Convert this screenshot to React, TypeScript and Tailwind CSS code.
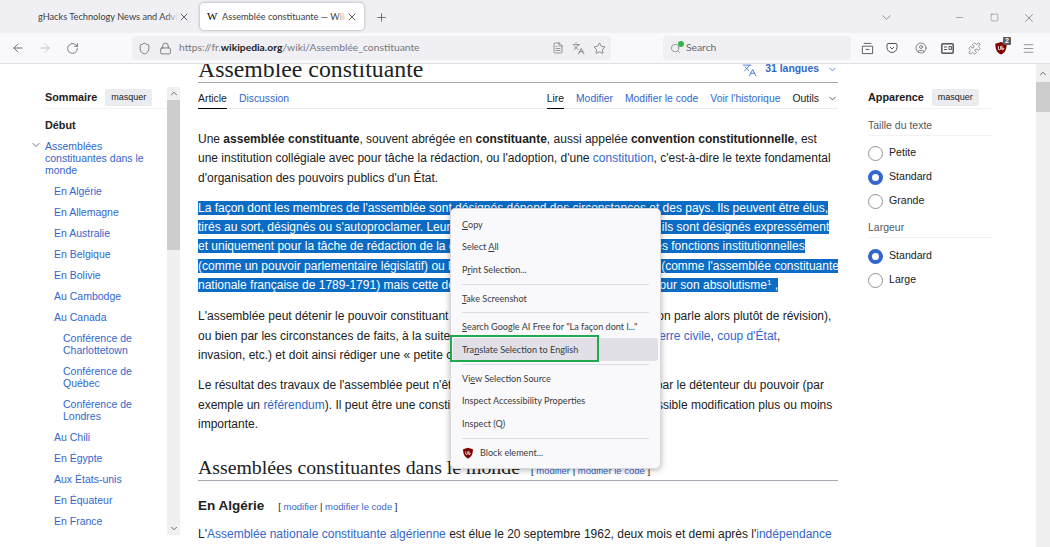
import React from 'react';
import {
  ArrowLeft, ArrowRight, RotateCw, Shield, Lock, FileText, Languages, Star, Search,
  ChevronDown, ChevronUp, Minus, Square, X, Plus, Menu, Puzzle, CircleUser,
} from 'lucide-react';

const A = ({ children }: { children: React.ReactNode }) => <a className="text-[#3366cc]">{children}</a>;

function Sel({ children }: { children: React.ReactNode }) {
  return <span className="bg-[#0a6cc4] text-white">{children}</span>;
}

function Line({ children }: { children: React.ReactNode }) {
  return <div className="h-[19.3px] whitespace-nowrap">{children}</div>;
}

function Radio({ on, label }: { on?: boolean; label: string }) {
  return (
    <div className="flex h-[24px] items-center gap-[6px]">
      {on ? (
        <span className="h-[15px] w-[15px] rounded-full border-[4.5px] border-[#3366cc] bg-white" />
      ) : (
        <span className="h-[15px] w-[15px] rounded-full border border-[#8f9398] bg-white" />
      )}
      <span className="text-[10.6px] text-[#202122]">{label}</span>
    </div>
  );
}

function TocItem({ lines, indent = 'pl-[9px]' }: { lines: string[]; indent?: string }) {
  return (
    <div className={`${indent} py-[4.5px] text-[10.5px] leading-[12px] text-[#3366cc]`}>
      {lines.map((l) => (
        <div key={l} className="whitespace-nowrap">{l}</div>
      ))}
    </div>
  );
}

function MenuItem({ children, active }: { children: React.ReactNode; active?: boolean }) {
  return (
    <div className={`mx-[2px] flex h-[22.7px] items-center rounded-[3px] px-[9px] whitespace-nowrap ${active ? 'bg-[#e0e0e6]' : ''}`}>
      {children}
    </div>
  );
}

const Sep = () => <div className="mx-[11px] my-[2.5px] h-px bg-[#dcdce0]" />;

function UBlock({ size }: { size: number }) {
  return (
    <svg width={size} height={size} viewBox="0 0 16 16">
      <path d="M8 1 L14.5 3 C14.5 9 13 13 8 15.5 C3 13 1.5 9 1.5 3 Z" fill="#800000" />
      <path d="M5 6 V9 C5 10.5 7.5 10.5 7.5 9 V6 M9 5 V10 M9 9 C10.5 7 11.5 8 11 9.5 C10.5 10.5 9.5 10 9 9.5" stroke="#fff" strokeWidth="1" fill="none" />
    </svg>
  );
}

export default function App() {
  return (
    <div className="relative flex h-[547px] w-[1050px] flex-col overflow-hidden bg-white font-['Liberation_Sans',sans-serif] text-[#202122]">
      {/* tabs */}
      <div className="flex h-[33px] items-start bg-[#f0f0f4] font-['Lato',sans-serif] text-[9.2px] text-[#3c3c40]">
        <div className="ml-[38px] mt-[3px] flex h-[27px] w-[152px] items-center">
          <span className="relative w-[144px] overflow-hidden whitespace-nowrap">
            gHacks Technology News and Advic
            <span className="absolute inset-y-0 right-0 w-[12px] bg-linear-to-r from-transparent to-[#f0f0f4]" />
          </span>
          <X size={12} className="shrink-0" strokeWidth={1.6} />
        </div>
        <div className="ml-[10px] mt-[3px] flex h-[27px] w-[164px] items-center rounded-[4px] bg-white pl-[7px] pr-[6px] shadow-[0_0_3px_rgba(0,0,0,0.35)]">
          <span className="w-[15px] shrink-0 font-['Liberation_Serif',serif] text-[11px] text-black">W</span>
          <span className="relative w-[124px] shrink-0 overflow-hidden whitespace-nowrap">
            Assemblée constituante — Wiki
            <span className="absolute inset-y-0 right-0 w-[10px] bg-linear-to-r from-transparent to-white" />
          </span>
          <X size={12} className="shrink-0" strokeWidth={1.6} />
        </div>
        <Plus size={13} className="ml-[11px] mt-[11px] text-[#55555a]" strokeWidth={1.5} />
        <div className="ml-auto mr-[14px] mt-[10px] flex items-center text-[#55555a]">
          <ChevronDown size={15} strokeWidth={1} />
          <Minus size={11} strokeWidth={1} className="ml-[60px]" />
          <Square size={9} strokeWidth={1.1} className="ml-[25px]" />
          <X size={14} strokeWidth={1} className="ml-[23px]" />
        </div>
      </div>

      {/* toolbar */}
      <div className="flex h-[31px] items-center border-b border-[#e0e0e2] bg-[#f9f9fb] text-[#55555a]">
        <ArrowLeft size={14} className="ml-[11px]" strokeWidth={1.4} />
        <ArrowRight size={14} className="ml-[13px] text-[#bbbbc0]" strokeWidth={1.4} />
        <RotateCw size={13} className="ml-[14px]" strokeWidth={1.4} />
        <div className="ml-[53px] flex h-[24px] w-[479px] items-center rounded-[4px] bg-[#f0f0f4] pl-[6px] pr-[5px] font-['Lato',sans-serif] text-[10.3px]">
          <Shield size={13} strokeWidth={1.3} />
          <Lock size={13} strokeWidth={1.3} className="ml-[8px]" />
          <span className="ml-[7px] whitespace-nowrap text-[#77777c]">https://fr.<span className="font-bold text-[#202124]">wikipedia.org</span>/wiki/Assemblée_constituante</span>
          <FileText size={12} strokeWidth={1.2} className="ml-auto" />
          <Languages size={13} strokeWidth={1.2} className="ml-[8px]" />
          <Star size={13} strokeWidth={1.2} className="ml-[8px]" />
        </div>
        <div className="ml-[52px] flex h-[24px] w-[188px] items-center rounded-[4px] bg-[#f0f0f4] pl-[7px] font-['Lato',sans-serif] text-[10.3px] text-[#66666a]">
          <span className="relative">
            <Search size={11} strokeWidth={1.3} />
            <span className="absolute -right-[3px] -top-[2px] h-[6px] w-[6px] rounded-full bg-[#2fb84a]" />
          </span>
          <span className="ml-[5px]">Search</span>
        </div>
        <svg width="13" height="13" viewBox="0 0 14 14" fill="none" stroke="currentColor" strokeWidth="1" className="ml-[10px]">
          <path d="M3 1.5h8M1.5 4.5h11v8h-11zM5 8h4" />
        </svg>
        <svg width="12" height="12" viewBox="0 0 12 12" fill="none" stroke="currentColor" strokeWidth="1" className="ml-[12px]">
          <path d="M1 2.5Q1 1.5 2 1.5H10Q11 1.5 11 2.5V5.5C11 8.5 8.5 10.5 6 10.5C3.5 10.5 1 8.5 1 5.5ZM4 5l2 2 2-2" />
        </svg>
        <CircleUser size={12} strokeWidth={1.4} className="ml-[17px]" />
        <svg width="13" height="11" viewBox="0 0 13 11" className="ml-[14px]" fill="none" stroke="currentColor">
          <rect x="0.8" y="0.8" width="11.4" height="9.4" rx="1" strokeWidth="1.5" />
          <path d="M3 4h3M3 6.5h3M8 3.5h2.5v3H8z" strokeWidth="1" />
        </svg>
        <Puzzle size={13} strokeWidth={1.1} className="ml-[14px]" />
        <div className="relative ml-[13px]">
          <UBlock size={14} />
          <span className="absolute -right-[3px] -top-[4px] rounded-[1px] bg-[#5b5b66] px-[2px] text-[7px] leading-[8px] font-bold text-white">2</span>
        </div>
        <Menu size={13} strokeWidth={1.1} className="ml-[14px]" />
      </div>

      {/* page */}
      <div className="flex min-h-0 flex-1">
        {/* toc */}
        <div className="w-[198px] shrink-0 pl-[45px]">
          <div className="flex w-[135px] pt-[25px]">
            <div className="w-[122px] shrink-0">
              <div className="flex h-[20px] items-center gap-[8px] border-b border-[#f2f2f4] pb-[3px]">
                <span className="text-[10.8px] font-bold">Sommaire</span>
                <span className="rounded-[2px] bg-[#eaecf0] px-[6px] py-[3px] text-[9px] leading-[11px]">masquer</span>
              </div>
              <div className="mt-[10px] text-[10.8px] font-bold leading-[12px]">Début</div>
              <div className="relative mt-[4px]">
                <ChevronDown size={12} className="absolute -left-[15px] top-[4px] text-[#444]" strokeWidth={1.5} />
                <TocItem indent="pl-0" lines={['Assemblées', 'constituantes dans le', 'monde']} />
              </div>
              <div className="-mt-[4.5px] pt-[5px]">
                <TocItem lines={['En Algérie']} />
                <TocItem lines={['En Allemagne']} />
                <TocItem lines={['En Australie']} />
                <TocItem lines={['En Belgique']} />
                <TocItem lines={['En Bolivie']} />
                <TocItem lines={['Au Cambodge']} />
                <TocItem lines={['Au Canada']} />
                <TocItem indent="pl-[18px]" lines={['Conférence de', 'Charlottetown']} />
                <TocItem indent="pl-[18px]" lines={['Conférence de', 'Québec']} />
                <TocItem indent="pl-[18px]" lines={['Conférence de', 'Londres']} />
                <TocItem lines={['Au Chili']} />
                <TocItem lines={['En Égypte']} />
                <TocItem lines={['Aux États-unis']} />
                <TocItem lines={['En Équateur']} />
                <TocItem lines={['En France']} />
              </div>
            </div>
          </div>
        </div>

        {/* article */}
        <div className="w-[640px] shrink-0 overflow-hidden text-[12px]">
          <div className="-mt-[9px] flex h-[28px] items-end justify-between border-b border-[#a2a9b1]">
            <h1 className="font-['Liberation_Serif',serif] text-[23.8px] leading-[26px] whitespace-nowrap">Assemblée constituante</h1>
            <div className="mb-[5px] flex items-center gap-[8px] text-[10.4px] font-bold text-[#3366cc]">
              <Languages size={15} strokeWidth={1.3} />
              <span>31 langues</span>
              <ChevronDown size={11} strokeWidth={1.6} />
            </div>
          </div>
          <div className="flex h-[26px] items-start justify-between border-b border-[#e8e9ec] pt-[8px] text-[10.4px]">
            <div className="flex gap-[12px]">
              <span className="h-[18px] border-b border-black">Article</span>
              <A>Discussion</A>
            </div>
            <div className="flex gap-[12px]">
              <span className="h-[18px] border-b border-black">Lire</span>
              <A>Modifier</A>
              <A>Modifier le code</A>
              <A>Voir l'historique</A>
              <span className="flex gap-[8px]">Outils <ChevronDown size={11} strokeWidth={1.6} className="mt-[2px]" /></span>
            </div>
          </div>

          <div className="mt-[21px]">
            <Line>Une <b>assemblée constituante</b>, souvent abrégée en <b>constituante</b>, aussi appelée <b>convention constitutionnelle</b>, est</Line>
            <Line>une institution collégiale avec pour tâche la rédaction, ou l'adoption, d'une <A>constitution</A>, c'est-à-dire le texte fondamental</Line>
            <Line>d'organisation des pouvoirs publics d'un État.</Line>
          </div>
          <div className="mt-[11px]">
            <Line><Sel>La façon dont les membres de l'assemblée sont désignés dépend des circonstances et des pays. Ils peuvent être élus,</Sel></Line>
            <Line><Sel>tirés au sort, désignés ou s'autoproclamer. Leur mandat est donc limité dans le temps : ils sont désignés expressément</Sel></Line>
            <Line><Sel>et uniquement pour la tâche de rédaction de la constitution, mais ils en exercent d'autres fonctions institutionnelles</Sel></Line>
            <Line><Sel>(comme un pouvoir parlementaire législatif) ou bien conservent tout le pouvoir de l'État (comme l'assemblée constituante</Sel></Line>
            <Line><Sel>nationale française de 1789-1791) mais cette dernière est surtout connue et critiquée pour son absolutisme<sup className="text-[8px]">1</sup> ,</Sel></Line>
          </div>
          <div className="mt-[12px]">
            <Line>L'assemblée peut détenir le pouvoir constituant de manière originaire ou bien dérivée (on parle alors plutôt de révision),</Line>
            <Line>ou bien par les circonstances de faits, à la suite d'une crise politique, <span className="ml-[80px]"><A>guerre civile</A></span>, <A>coup d'État</A>,</Line>
            <Line>invasion, etc.) et doit ainsi rédiger une « petite constitution ».</Line>
          </div>
          <div className="mt-[11px]">
            <Line>Le résultat des travaux de l'assemblée peut n'être qu'un simple projet soumis ensuite, par le détenteur du pouvoir (par</Line>
            <Line>exemple un <A>référendum</A>). Il peut être une constitution définitive ou faire l'objet d'une possible modification plus ou moins</Line>
            <Line>importante.</Line>
          </div>
          <div className="mt-[20px] flex h-[27px] items-baseline gap-[11px] border-b border-[#a2a9b1] whitespace-nowrap">
            <h2 className="font-['Liberation_Serif',serif] text-[19.8px] leading-[26px]">Assemblées constituantes dans le monde</h2>
            <span className="text-[9.5px]">[ <A>modifier</A> | <A>modifier le code</A> ]</span>
          </div>
          <div className="mt-[15px] flex h-[20px] items-baseline gap-[14px] whitespace-nowrap">
            <h3 className="text-[13.5px] font-bold">En Algérie</h3>
            <span className="text-[9.5px]">[ <A>modifier</A> | <A>modifier le code</A> ]</span>
          </div>
          <div className="mt-[9px]">
            <Line>L'<A>Assemblée nationale constituante algérienne</A> est élue le 20 septembre 1962, deux mois et demi après l'<A>indépendance</A></Line>
            <Line>du pays. Elle adopte la constitution de 1963.</Line>
          </div>
        </div>

        {/* appearance */}
        <div className="ml-[30px] w-[125px] shrink-0 pt-[25px]">
          <div className="flex h-[20px] items-center gap-[8px] border-b border-[#f2f2f4] pb-[3px]">
            <span className="text-[10.8px] font-bold">Apparence</span>
            <span className="rounded-[2px] bg-[#eaecf0] px-[6px] py-[3px] text-[9px] leading-[11px]">masquer</span>
          </div>
          <div className="mt-[6px] h-[21px] border-b border-[#f2f2f4] text-[10.5px] leading-[20px] text-[#54595d]">Taille du texte</div>
          <div className="mt-[5px]">
            <Radio label="Petite" />
            <Radio on label="Standard" />
            <Radio label="Grande" />
          </div>
          <div className="mt-[4px] h-[21px] border-b border-[#f2f2f4] text-[10.5px] leading-[20px] text-[#54595d]">Largeur</div>
          <div className="mt-[6px]">
            <Radio on label="Standard" />
            <Radio label="Large" />
          </div>
        </div>

        {/* page scrollbar */}
        <div className="ml-auto flex w-[14px] shrink-0 flex-col items-center bg-[#f0f0f0]">
          <ChevronUp size={10} strokeWidth={2} className="mt-[1px] h-[17px] text-[#505050]" />
          <div className="h-[30px] w-full bg-[#cdcdcd]" />
        </div>
      </div>

      {/* toc scrollbar */}
      <div className="absolute left-[167px] top-[87px] flex h-[448px] w-[13px] flex-col items-center bg-[#f0f0f0]">
        <ChevronUp size={10} strokeWidth={2} className="h-[13px] text-[#505050]" />
        <div className="h-[150px] w-full bg-[#cdcdcd]" />
        <ChevronDown size={10} strokeWidth={2} className="mt-auto h-[13px] text-[#505050]" />
      </div>

      {/* context menu */}
      <div className="absolute left-[450px] top-[208px] w-[211px] rounded-[5px] border border-[#d8d8dc] bg-[#f9f9fb] py-[4px] font-['Lato',sans-serif] text-[9.1px] text-[#3b3b40] shadow-[0_1px_6px_rgba(0,0,0,0.3)]">
        <MenuItem><span><u>C</u>opy</span></MenuItem>
        <MenuItem><span>Select <u>A</u>ll</span></MenuItem>
        <MenuItem><span>P<u>r</u>int Selection...</span></MenuItem>
        <Sep />
        <MenuItem><span><u>T</u>ake Screenshot</span></MenuItem>
        <Sep />
        <MenuItem><span><u>S</u>earch Google AI Free for "La façon dont l..."</span></MenuItem>
        <MenuItem active><span>Tra<u>n</u>slate Selection to English</span></MenuItem>
        <Sep />
        <MenuItem><span>Vi<u>e</u>w Selection Source</span></MenuItem>
        <MenuItem>Inspect Accessibility Properties</MenuItem>
        <MenuItem>Inspect (Q)</MenuItem>
        <Sep />
        <MenuItem>
          <UBlock size={12} />
          <span className="ml-[6px]">Block element...</span>
        </MenuItem>
      </div>

      {/* annotation */}
      <div className="absolute left-[450px] top-[335px] h-[27px] w-[149px] border-2 border-[#22a94f]" />
    </div>
  );
}
